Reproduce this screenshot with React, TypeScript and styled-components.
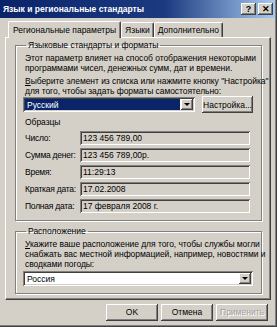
import { Fragment } from 'react';
import styled, { createGlobalStyle } from 'styled-components';

const GlobalStyle = createGlobalStyle`
  html, body {
    margin: 0;
    padding: 0;
    background: #d4d0c8;
  }
  * {
    box-sizing: border-box;
  }
`

const Window = styled.div`
  width: 277px;
  height: 327px;
  background: #d4d0c8;
  font-family: "Liberation Sans", Arial, sans-serif;
  font-size: 8.5px;
  color: #000;
  display: flex;
  flex-direction: column;
  padding: 0 2px 2px 0;
  box-shadow: inset -1px -1px 0 #404040, inset -2px -2px 0 #808080;
`

const TitleBar = styled.div`
  height: 18px;
  flex: none;
  display: flex;
  align-items: center;
  justify-content: space-between;
  padding: 0 2px 0 3px;
  background: linear-gradient(to right, #0a246a 0%, #1c3a80 60%, #a6caf0 100%);
`

const Title = styled.span`
  color: #fff;
  font-weight: bold;
  font-size: 8.5px;
  white-space: nowrap;
`

const TitleButtons = styled.div`
  display: flex;
  gap: 2px;
`

const CaptionButton = styled.div`
  width: 15px;
  height: 12px;
  background: #d4d0c8;
  display: flex;
  align-items: center;
  justify-content: center;
  font-weight: bold;
  font-size: 9px;
  line-height: 1;
  box-shadow: inset -1px -1px 0 #404040, inset 1px 1px 0 #fff, inset -2px -2px 0 #808080;
`

const Body = styled.div`
  flex: 1;
  display: flex;
  flex-direction: column;
  padding: 2px 4px 0 5px;
`

const TabRow = styled.div`
  display: flex;
  align-items: flex-end;
  height: 17px;
  flex: none;
  padding-left: 3px;
  position: relative;
  z-index: 1;
`

const Tab = styled.div<{ $active?: boolean }>`
  height: ${p => (p.$active ? '17px' : '15px')};
  padding: 0 ${p => (p.$active ? '4px' : '3px')};
  display: flex;
  align-items: center;
  background: #d4d0c8;
  white-space: nowrap;
  border-top: 1px solid #fff;
  border-left: 1px solid #fff;
  border-right: 1px solid #404040;
  border-radius: 2px 2px 0 0;
  box-shadow: inset -1px 0 0 #808080;
  margin-bottom: ${p => (p.$active ? '-1px' : '0')};
`

const Panel = styled.div`
  height: 263px;
  flex: none;
  border-top: 1px solid #fff;
  border-left: 1px solid #fff;
  border-right: 1px solid #404040;
  border-bottom: 1px solid #404040;
  box-shadow: inset -1px -1px 0 #808080;
  padding: 2px 8px 0 9px;
  display: flex;
  flex-direction: column;
  gap: 5px;
`

const Group = styled.fieldset`
  margin: 0;
  min-width: 0;
  padding: 0 8px 7px 8px;
  border: 1px solid #808080;
  box-shadow: inset 1px 1px 0 #fff, 1px 1px 0 #fff;
  display: flex;
  flex-direction: column;
`

const Legend = styled.legend`
  padding: 0 2px;
  margin-left: 2px;
  line-height: 10px;
  white-space: nowrap;
`

const Para = styled.p<{ $top?: number }>`
  margin: ${p => p.$top ?? 0}px 0 0 1px;
  line-height: 10px;
  white-space: nowrap;
  letter-spacing: -0.05px;
`

const Acc = styled.span`
  text-decoration: underline;
`

const PickRow = styled.div<{ $top?: number }>`
  display: flex;
  align-items: center;
  gap: 7px;
  margin: ${p => p.$top ?? 0}px 0 0 -1px;
`

const Combo = styled.div<{ $w: number }>`
  width: ${p => p.$w}px;
  height: 15px;
  background: #fff;
  display: flex;
  padding: 2px;
  box-shadow: inset 1px 1px 0 #808080, inset -1px -1px 0 #fff, inset 2px 2px 0 #404040, inset -2px -2px 0 #d4d0c8;
`

const ComboText = styled.div<{ $selected?: boolean }>`
  flex: 1;
  display: flex;
  align-items: center;
  padding-left: 2px;
  margin-right: 1px;
  background: ${p => (p.$selected ? '#0a246a' : 'transparent')};
  color: ${p => (p.$selected ? '#fff' : '#000')};
`

const DropButton = styled.div`
  width: 12px;
  background: #d4d0c8;
  display: flex;
  align-items: center;
  justify-content: center;
  box-shadow: inset -1px -1px 0 #404040, inset 1px 1px 0 #fff, inset -2px -2px 0 #808080;
`

const Arrow = styled.div`
  width: 0;
  height: 0;
  border-left: 3px solid transparent;
  border-right: 3px solid transparent;
  border-top: 3px solid #000;
`

const Button = styled.div<{ $w: number; $disabled?: boolean }>`
  width: ${p => p.$w}px;
  height: 17px;
  display: flex;
  align-items: center;
  justify-content: center;
  background: #d4d0c8;
  white-space: nowrap;
  color: ${p => (p.$disabled ? '#a0a0a0' : '#000')};
  text-shadow: ${p => (p.$disabled ? '1px 1px 0 #fff' : 'none')};
  box-shadow: inset -1px -1px 0 #404040, inset 1px 1px 0 #fff, inset -2px -2px 0 #808080;
`

const Samples = styled.div`
  display: grid;
  grid-template-columns: 55px 170px;
  grid-auto-rows: 14px;
  row-gap: 3px;
  align-items: center;
  margin-top: 4px;
  padding-left: 1px;
  white-space: nowrap;
`

const SampleLabel = styled.span`
  letter-spacing: -0.25px;
`

const SampleBox = styled.div`
  height: 14px;
  display: flex;
  align-items: center;
  padding-left: 3px;
  box-shadow: inset 1px 1px 0 #808080, inset -1px -1px 0 #fff, inset 2px 2px 0 #404040, inset -2px -2px 0 #d4d0c8;
`

const Footer = styled.div`
  flex: 1;
  display: flex;
  justify-content: flex-end;
  align-items: center;
  gap: 3px;
  padding-right: 3px;
  padding-bottom: 1px;
`

const samples = [
  ['Число:', '123 456 789,00'],
  ['Сумма денег:', '123 456 789,00р.'],
  ['Время:', '11:29:13'],
  ['Краткая дата:', '17.02.2008'],
  ['Полная дата:', '17 февраля 2008 г.'],
]

export default function App() {
  return (
    <>
      <GlobalStyle />
      <Window>
        <TitleBar>
          <Title>Язык и региональные стандарты</Title>
          <TitleButtons>
            <CaptionButton>?</CaptionButton>
            <CaptionButton>✕</CaptionButton>
          </TitleButtons>
        </TitleBar>
        <Body>
          <TabRow>
            <Tab $active>Региональные параметры</Tab>
            <Tab>Языки</Tab>
            <Tab>Дополнительно</Tab>
          </TabRow>
          <Panel>
            <Group>
              <Legend>Языковые стандарты и форматы</Legend>
              <Para $top={3}>
                Этот параметр влияет на способ отображения некоторыми
                <br />
                программами чисел, денежных сумм, дат и времени.
              </Para>
              <Para $top={3}>
                <Acc>В</Acc>ыберите элемент из списка или нажмите кнопку "Настройка"
                <br />
                для того, чтобы задать форматы самостоятельно:
              </Para>
              <PickRow>
                <Combo $w={172}>
                  <ComboText $selected>Русский</ComboText>
                  <DropButton><Arrow /></DropButton>
                </Combo>
                <Button $w={51}>Настройка...</Button>
              </PickRow>
              <Para $top={4}>Образцы</Para>
              <Samples>
                {samples.map(([label, value]) => (
                  <Fragment key={label}>
                    <SampleLabel>{label}</SampleLabel>
                    <SampleBox>{value}</SampleBox>
                  </Fragment>
                ))}
              </Samples>
            </Group>
            <Group>
              <Legend>Расположение</Legend>
              <Para $top={3}>
                <Acc>У</Acc>кажите ваше расположение для того, чтобы службы могли
                <br />
                снабжать вас местной информацией, например, новостями и
                <br />
                сводками погоды:
              </Para>
              <PickRow $top={2}>
                <Combo $w={232}>
                  <ComboText>Россия</ComboText>
                  <DropButton><Arrow /></DropButton>
                </Combo>
              </PickRow>
            </Group>
          </Panel>
          <Footer>
            <Button $w={52}>OK</Button>
            <Button $w={52}>Отмена</Button>
            <Button $w={52} $disabled>Применить</Button>
          </Footer>
        </Body>
      </Window>
    </>
  )
}
